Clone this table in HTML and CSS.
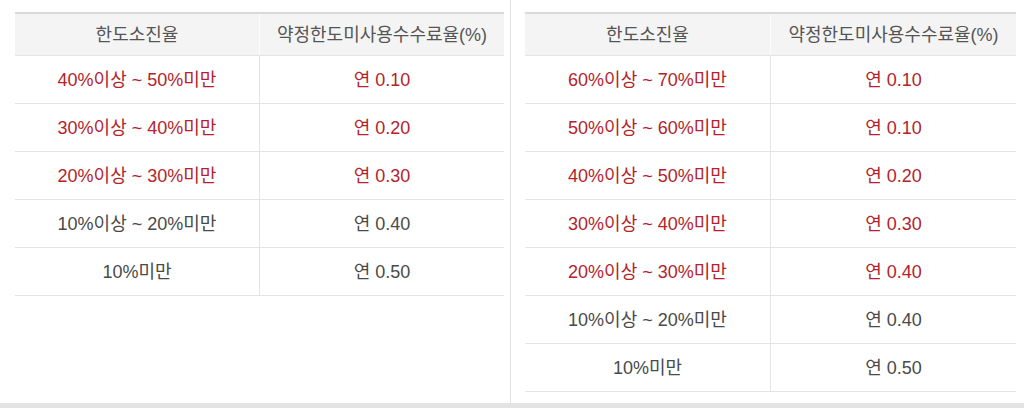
FILE: index.html
```html
<!DOCTYPE html>
<html lang="ko">
<head>
<meta charset="utf-8">
<link rel="stylesheet" href="styles.css">
</head>
<body>
<div class="wrap">
  <div class="panel panel-left">
    <table class="rate">
      <thead>
        <tr><th>한도소진율</th><th>약정한도미사용수수료율(%)</th></tr>
      </thead>
      <tbody>
        <tr class="hl"><td>40%이상 ~ 50%미만</td><td>연 0.10</td></tr>
        <tr class="hl"><td>30%이상 ~ 40%미만</td><td>연 0.20</td></tr>
        <tr class="hl"><td>20%이상 ~ 30%미만</td><td>연 0.30</td></tr>
        <tr><td>10%이상 ~ 20%미만</td><td>연 0.40</td></tr>
        <tr><td>10%미만</td><td>연 0.50</td></tr>
      </tbody>
    </table>
  </div>
  <div class="panel panel-right">
    <table class="rate">
      <thead>
        <tr><th>한도소진율</th><th>약정한도미사용수수료율(%)</th></tr>
      </thead>
      <tbody>
        <tr class="hl"><td>60%이상 ~ 70%미만</td><td>연 0.10</td></tr>
        <tr class="hl"><td>50%이상 ~ 60%미만</td><td>연 0.10</td></tr>
        <tr class="hl"><td>40%이상 ~ 50%미만</td><td>연 0.20</td></tr>
        <tr class="hl"><td>30%이상 ~ 40%미만</td><td>연 0.30</td></tr>
        <tr class="hl"><td>20%이상 ~ 30%미만</td><td>연 0.40</td></tr>
        <tr><td>10%이상 ~ 20%미만</td><td>연 0.40</td></tr>
        <tr><td>10%미만</td><td>연 0.50</td></tr>
      </tbody>
    </table>
  </div>
</div>
</body>
</html>
```

FILE: styles.css
```css
html, body {
  margin: 0;
  padding: 0;
  background: #fff;
}

body {
  font-family: "Liberation Sans", "Noto Sans CJK KR", sans-serif;
  font-size: 18px;
  color: #4a4a4a;
}

.wrap {
  display: flex;
  height: 403px;
  border-bottom: 5px solid #e3e3e3;
}

.panel {
  box-sizing: border-box;
  padding-top: 12px;
}

.panel-left {
  width: 511px;
  padding-left: 15px;
  padding-right: 6px;
  border-right: 1px solid #e2e2e2;
}

.panel-right {
  flex: 1;
  padding-left: 14px;
  padding-right: 8px;
}

.rate {
  width: 100%;
  border-collapse: collapse;
  table-layout: fixed;
}

.rate th {
  height: 38px;
  padding: 0 0 3px;
  font-weight: normal;
  color: #555;
  background: #f4f4f4;
  border-top: 2px solid #d9d9d9;
  border-bottom: 1px solid #e4e4e4;
  text-align: center;
}

.rate th + th {
  border-left: 1px solid #fcfcfc;
}

.rate td {
  height: 44px;
  padding: 0 0 3px;
  text-align: center;
  border-bottom: 1px solid #e4e4e4;
}

.rate td + td {
  border-left: 1px solid #e4e4e4;
}

.rate tr.hl td {
  color: #b4232c;
}
```
